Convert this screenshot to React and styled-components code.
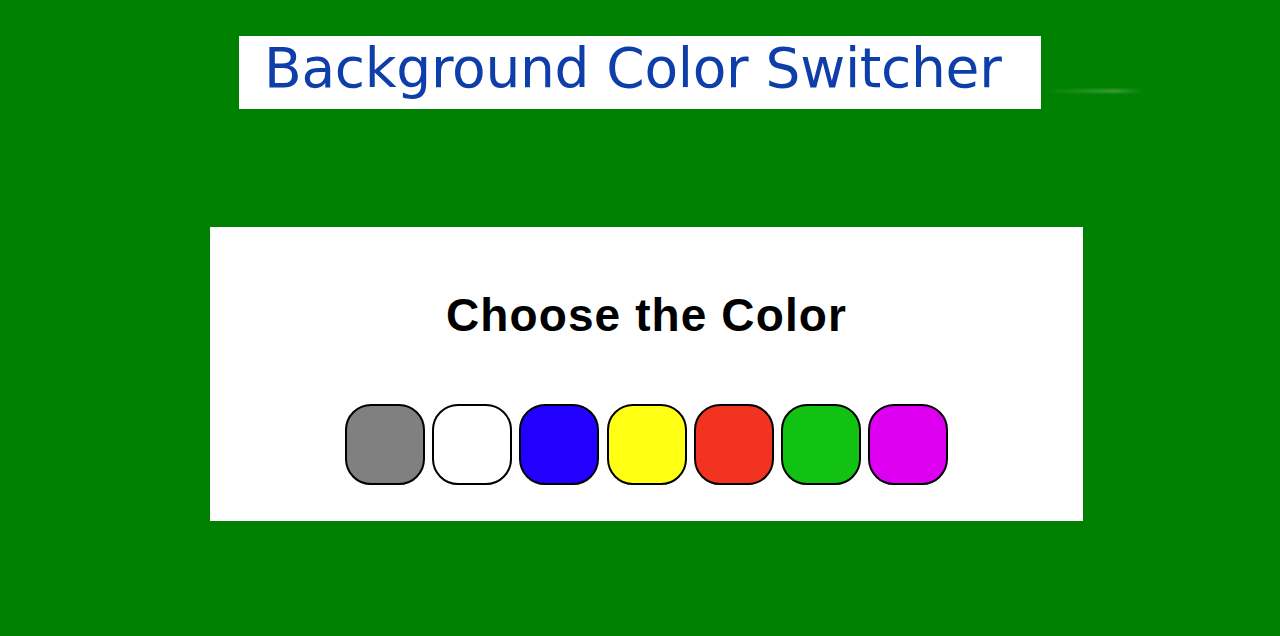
import * as React from 'react'
import styled, {createGlobalStyle} from 'styled-components'

const GlobalStyle = createGlobalStyle`
    html, body {
        margin: 0;
        padding: 0;
        background-color: #008000;
    }
    body {
        min-height: 636px;
        font-family: "Liberation Sans", Arial, sans-serif;
    }
`

const Page = styled.main`
    display: flex;
    flex-direction: column;
    align-items: flex-start;
    padding-top: 36px;
`

const TitleBox = styled.header`
    position: relative;
    align-self: center;
    box-sizing: border-box;
    width: 802px;
    height: 73px;
    padding-left: 25px;
    background-color: #fff;

    &::after {
        content: '';
        position: absolute;
        top: 53px;
        right: -104px;
        width: 102px;
        height: 4px;
        background: linear-gradient(to right, rgba(255,255,255,0), rgba(255,255,255,0.22) 70%, rgba(255,255,255,0));
        filter: blur(1px);
    }
`

const Title = styled.h1`
    margin: 0;
    font-family: "DejaVu Sans", Verdana, sans-serif;
    font-weight: 400;
    font-size: 55px;
    line-height: 64px;
    letter-spacing: -0.3px;
    color: #0d3ea9;
    white-space: nowrap;
`

const Card = styled.section`
    display: flex;
    flex-direction: column;
    align-items: center;
    box-sizing: border-box;
    width: 873px;
    height: 294px;
    margin: 118px 0 0 210px;
    padding-top: 62px;
    background-color: #fff;
`

const Heading = styled.h2`
    margin: 0;
    font-family: "Liberation Sans", Arial, sans-serif;
    font-weight: 700;
    font-size: 46px;
    line-height: 53px;
    letter-spacing: 1.1px;
    color: #000;
`

const Swatches = styled.div`
    display: flex;
    gap: 7.33px;
    margin-top: 62px;
`

const Swatch = styled.button`
    box-sizing: border-box;
    width: 80px;
    height: 81px;
    padding: 0;
    border: 2px solid #000;
    border-radius: 26px;
    background-color: ${(p) => p.color};
    cursor: pointer;
`

const colors = ['#808080', '#ffffff', '#2200ff', '#ffff14', '#f23322', '#12c212', '#dd00f0']

const App = () => {
    const [bg, setBg] = React.useState(null)

    React.useEffect(() => {
        if (bg) document.body.style.backgroundColor = bg
    }, [bg])

    return (
        <Page>
            <GlobalStyle />
            <TitleBox>
                <Title>Background Color Switcher</Title>
            </TitleBox>
            <Card>
                <Heading>Choose the Color</Heading>
                <Swatches>
                    {colors.map((c) => (
                        <Swatch key={c} color={c} onClick={() => setBg(c)} aria-label={c} />
                    ))}
                </Swatches>
            </Card>
        </Page>
    )
}

export default App
